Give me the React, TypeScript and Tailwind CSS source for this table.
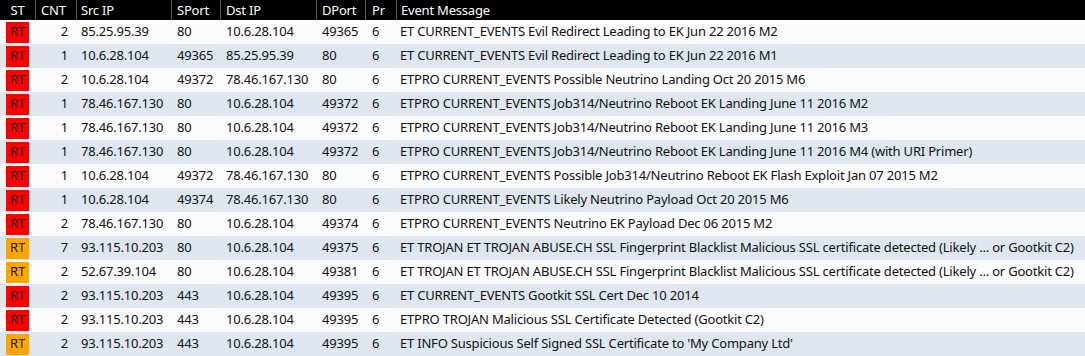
const rows: [string, number, string, string, string, string, string, string][] = [
  ["r", 2, "85.25.95.39", "80", "10.6.28.104", "49365", "6", "ET CURRENT_EVENTS Evil Redirect Leading to EK Jun 22 2016 M2"],
  ["r", 1, "10.6.28.104", "49365", "85.25.95.39", "80", "6", "ET CURRENT_EVENTS Evil Redirect Leading to EK Jun 22 2016 M1"],
  ["r", 2, "10.6.28.104", "49372", "78.46.167.130", "80", "6", "ETPRO CURRENT_EVENTS Possible Neutrino Landing Oct 20 2015 M6"],
  ["r", 1, "78.46.167.130", "80", "10.6.28.104", "49372", "6", "ETPRO CURRENT_EVENTS Job314/Neutrino Reboot EK Landing June 11 2016 M2"],
  ["r", 1, "78.46.167.130", "80", "10.6.28.104", "49372", "6", "ETPRO CURRENT_EVENTS Job314/Neutrino Reboot EK Landing June 11 2016 M3"],
  ["r", 1, "78.46.167.130", "80", "10.6.28.104", "49372", "6", "ETPRO CURRENT_EVENTS Job314/Neutrino Reboot EK Landing June 11 2016 M4 (with URI Primer)"],
  ["r", 1, "10.6.28.104", "49372", "78.46.167.130", "80", "6", "ETPRO CURRENT_EVENTS Possible Job314/Neutrino Reboot EK Flash Exploit Jan 07 2015 M2"],
  ["r", 1, "10.6.28.104", "49374", "78.46.167.130", "80", "6", "ETPRO CURRENT_EVENTS Likely Neutrino Payload Oct 20 2015 M6"],
  ["r", 2, "78.46.167.130", "80", "10.6.28.104", "49374", "6", "ETPRO CURRENT_EVENTS Neutrino EK Payload Dec 06 2015 M2"],
  ["o", 7, "93.115.10.203", "80", "10.6.28.104", "49375", "6", "ET TROJAN ET TROJAN ABUSE.CH SSL Fingerprint Blacklist Malicious SSL certificate detected (Likely ... or Gootkit C2)"],
  ["o", 2, "52.67.39.104", "80", "10.6.28.104", "49381", "6", "ET TROJAN ET TROJAN ABUSE.CH SSL Fingerprint Blacklist Malicious SSL certificate detected (Likely ... or Gootkit C2)"],
  ["r", 2, "93.115.10.203", "443", "10.6.28.104", "49395", "6", "ET CURRENT_EVENTS Gootkit SSL Cert Dec 10 2014"],
  ["r", 2, "93.115.10.203", "443", "10.6.28.104", "49395", "6", "ETPRO TROJAN Malicious SSL Certificate Detected (Gootkit C2)"],
  ["o", 2, "93.115.10.203", "443", "10.6.28.104", "49395", "6", "ET INFO Suspicious Self Signed SSL Certificate to 'My Company Ltd'"],
];

const cols = "grid grid-cols-[35px_41px_95px_49px_96px_49px_31px_1fr]";

export default function App() {
  return (
    <div className="w-[1085px] h-[356px] overflow-hidden bg-white text-[13px] tracking-[-0.2px] font-['Noto_Sans',sans-serif]">
      <div className={`${cols} h-5 bg-black text-white leading-5`}>
        <div className="text-center">ST</div>
        <div className="border-l border-[#5a5a5a] pl-[5px]">CNT</div>
        <div className="border-l border-[#5a5a5a] pl-[4px]">Src IP</div>
        <div className="border-l border-[#5a5a5a] pl-[5px]">SPort</div>
        <div className="border-l border-[#5a5a5a] pl-[5px]">Dst IP</div>
        <div className="border-l border-[#5a5a5a] pl-[5px]">DPort</div>
        <div className="border-l border-[#5a5a5a] pl-[6px]">Pr</div>
        <div className="border-l border-[#5a5a5a] pl-[4px]">Event Message</div>
      </div>
      {rows.map((r, i) => (
        <div
          key={i}
          className={`${cols} h-6 items-center text-[#111] whitespace-nowrap ${i % 2 === 0 ? "bg-[#fbfbfb]" : "bg-[#dfe6f0]"}`}
        >
          <div className="pl-[6px]">
            <div className={`w-[23px] h-[21px] flex items-center justify-center ${r[0] === "r" ? "bg-[#ff0000]" : "bg-[#ffa500]"}`}>
              RT
            </div>
          </div>
          <div className="text-right pr-[8px]">{r[1]}</div>
          <div className="pl-[5px]">{r[2]}</div>
          <div className="pl-[6px]">{r[3]}</div>
          <div className="pl-[6px]">{r[4]}</div>
          <div className="pl-[6px]">{r[5]}</div>
          <div className="pl-[7px]">{r[6]}</div>
          <div className="pl-[4px]">{r[7]}</div>
        </div>
      ))}
    </div>
  );
}
